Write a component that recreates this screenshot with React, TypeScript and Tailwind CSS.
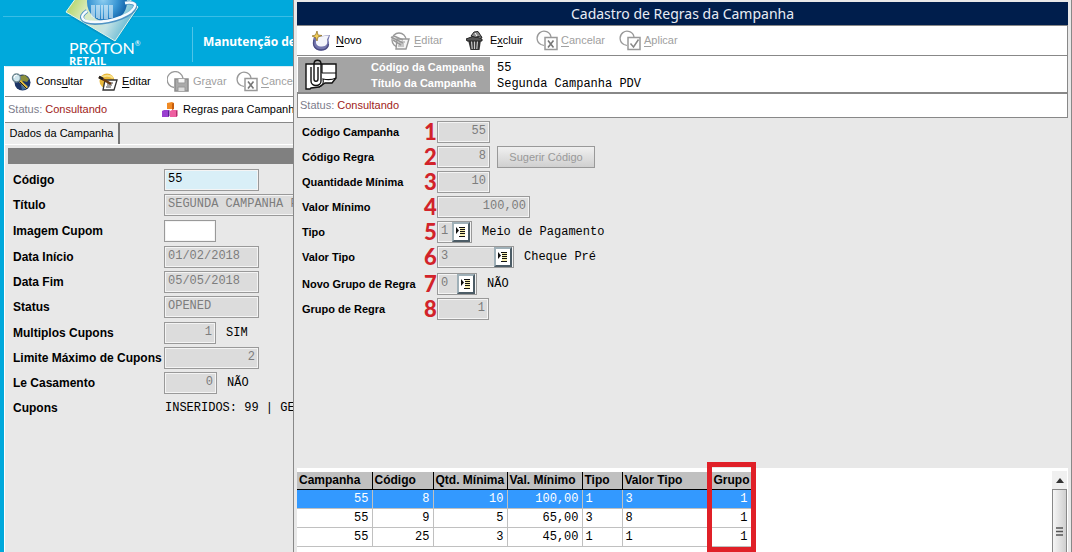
import type { ReactNode } from 'react';
import clsx from 'clsx';

type ToolButtonProps = {
  icon: ReactNode;
  before?: string;
  hotkey?: string;
  after?: string;
  disabled?: boolean;
  className?: string;
};

type FieldProps = {
  id: string;
  label: string;
  value: string;
  width: string;
  step?: string;
  hint?: string;
  align?: 'left' | 'right';
  tone?: 'disabled' | 'active' | 'empty';
  lookup?: boolean;
  labelClass: string;
  children?: ReactNode;
};

const GlobeSearchIcon = () => (
  <svg width="20" height="18" viewBox="0 0 20 18" aria-hidden="true">
    <circle cx="11.5" cy="9.5" r="8" fill="#1c3566" />
    <path d="M9 3l5-1 4 4-2 3-4-1-3 2-2-3z" fill="#8b8f3c" />
    <path d="M10 12l4-1 3 2-2 3-4 1z" fill="#3c6c9c" />
    <path d="M9 8l7 7" stroke="#e8c03c" strokeWidth="2.5" />
    <path d="M8 8l8 8" stroke="#222" strokeWidth="1" />
    <circle cx="5.5" cy="5" r="4" fill="#cfe6ee" stroke="#6d8790" strokeWidth="1.4" />
    <path d="M3 5a3 3 0 0 1 3-3" fill="none" stroke="#fff" />
  </svg>
);

const EditIcon = () => (
  <svg width="20" height="18" viewBox="0 0 20 18" aria-hidden="true">
    <circle cx="9" cy="8" r="7.5" fill="#e9b83a" />
    <path d="M2 6c3-4 10-4 13-1" fill="none" stroke="#f8e08a" strokeWidth="2" />
    <path d="M7 7h12l-3 10H5z" fill="#fff" stroke="#333" strokeWidth="1.3" />
    <path d="M9 10h6M9 12h5M8 14h5" stroke="#444" strokeWidth="1" />
    <path d="M1 4l12 7" stroke="#6b3b12" strokeWidth="2.6" />
    <path d="M1 4l4 2" stroke="#222" strokeWidth="2.6" />
  </svg>
);

const EditOffIcon = () => (
  <svg width="20" height="18" viewBox="0 0 20 18" fill="none" stroke="#999" aria-hidden="true">
    <circle cx="9" cy="8" r="7" strokeWidth="1.3" />
    <path d="M7 7h12l-3 10H6z" fill="#f4f4f4" strokeWidth="1.4" />
    <path d="M9 10h6M9 12h5M8 14h6" />
    <path d="M1 5l12 6M3 8l8 5M4 4l9 4" strokeWidth="1.5" />
  </svg>
);

const SaveOffIcon = () => (
  <svg width="22" height="21" viewBox="0 0 22 21" fill="none" stroke="#999" aria-hidden="true">
    <path d="M7 16.5A8 8 0 1 1 16 7" strokeWidth="1.3" />
    <rect x="8" y="8" width="13" height="12" fill="#aaa" stroke="#8c8c8c" strokeWidth="1.5" />
    <path d="M11 8v4h7V8" fill="#f5f5f5" />
    <path d="M11 20v-4h7v4" fill="#ddd" />
  </svg>
);

const MarkOffIcon = ({ mark }: { mark: 'cross' | 'check' }) => (
  <svg width="22" height="21" viewBox="0 0 22 21" fill="none" stroke="#999" aria-hidden="true">
    <path d="M8 15.5l-3-1A7 7 0 1 1 15 7" strokeWidth="1.3" />
    <rect x="9" y="7.5" width="12" height="12" fill="#fff" strokeWidth="1.5" />
    {mark === 'cross' ? (
      <path d="M12 10.5l5.5 7M17.5 10.5L12 17.5" stroke="#777" strokeWidth="1.6" />
    ) : (
      <path d="M11.5 13.5l3 3.5 5-7.5" stroke="#888" strokeWidth="1.5" />
    )}
  </svg>
);

const NewIcon = () => (
  <svg width="20" height="20" viewBox="0 0 20 20" aria-hidden="true">
    <path d="M3 6l16-2-1.500 5c2 6-1 10.500-7 10.500S2 16 2 11c0-2 0-3 1-5z" fill="#7577ae" />
    <path d="M5 6l13-1.500-2 4c1 4-.5 7-5 7s-6.500-2-6-5.500z" fill="#f4f5fb" />
    <path d="M3 9c-2 6 2 10 7 10 4 0 7-2 7.500-6" fill="none" stroke="#4d4e84" strokeWidth="1.3" />
    <path d="M6 0l1 4 4 .5-4 1.500-1 4-1.500-3.500L1 5l3.500-1z" fill="#f3cf57" stroke="#8a6a20" strokeWidth=".7" />
  </svg>
);

const TrashIcon = () => (
  <svg width="18" height="20" viewBox="0 0 18 20" aria-hidden="true">
    <path d="M2 9h13l-1.500 10h-9z" fill="#333" />
    <path d="M5.500 10l.7 8M8.500 10v8M11.500 10l-.7 8" stroke="#c8c8c8" strokeWidth="1.2" />
    <path d="M0 8l8-3 8 3v2H1z" fill="#555" stroke="#222" />
    <path d="M5 5l3-4 4-.5 4 6-4-1-2 1z" fill="#8a8a8a" stroke="#222" />
    <path d="M9 2l2 3" stroke="#fff" />
  </svg>
);

const BlocksIcon = () => (
  <svg width="16" height="16" viewBox="0 0 16 16" aria-hidden="true">
    <path d="M5 1l5-1 2 1v6H5z" fill="#f08a24" />
    <path d="M10 1.500l2-.5v6l-2 1z" fill="#c65c0c" />
    <path d="M0 9l2-1h5v6l-1 1H0z" fill="#9a3fd0" />
    <path d="M6 9l1.500-1v6L6 15z" fill="#5c1c94" />
    <path d="M8 9l2-1h5v6l-1 1H8z" fill="#ee5fa0" />
    <path d="M14 9l1.500-1v6L14 15z" fill="#b42c6c" />
  </svg>
);

const ClipIcon = () => (
  <svg width="32" height="32" viewBox="0 0 32 32" aria-hidden="true">
    <path d="M1 5h30v14l-4 5h-7l-6 4-8 1-1 1H1z" fill="#fff" stroke="#111" strokeWidth="1.4" />
    <path d="M17 5v9M17 14h14M14 28c3-1 5-4 4-8 5 1 9 1 13-1" fill="none" stroke="#111" strokeWidth="1.2" />
    <path
      d="M6 8v14c0 6 10 6 10 0V5c0-5-7-5-7 0v15c0 3 4 3 4 0V8"
      fill="none"
      stroke="#111"
      strokeWidth="1.4"
    />
  </svg>
);

const LookupIcon = () => (
  <svg width="14" height="16" viewBox="0 0 14 16" aria-hidden="true">
    <path d="M2 3v7l3-3.500z" fill="#111" />
    <rect x="6" y="3" width="5" height="9" fill="#f7eeb0" />
    <path d="M5 3.500h6M6 5.500h5M6 7.500h5M6 9.500h5M5 12.500h6" stroke="#111" />
  </svg>
);

const ProtonLogo = () => (
  <svg width="78" height="43" viewBox="64 0 78 43" aria-hidden="true">
    <defs>
      <linearGradient id="sheet" x1="0" y1="0" x2="1" y2="0.3">
        <stop offset="0" stopColor="#a9cf54" />
        <stop offset="0.35" stopColor="#dcecc0" />
        <stop offset="0.7" stopColor="#c4e2e4" />
        <stop offset="1" stopColor="#5eb6d2" />
      </linearGradient>
      <radialGradient id="globe" cx="0.4" cy="0.45" r="0.6">
        <stop offset="0" stopColor="#8ccdf0" />
        <stop offset="0.6" stopColor="#3a96d4" />
        <stop offset="1" stopColor="#1566ac" />
      </radialGradient>
    </defs>
    <path d="M67 15l47 28 26-36z" fill="#0786b4" opacity=".5" />
    <path d="M66 12L76-2h52l10 9-23 34z" fill="url(#sheet)" stroke="#e8f5ea" />
    <circle cx="107" cy="2" r="20" fill="url(#globe)" />
    <path
      d="M92 5v12M94 5v13M97 5v13M99 5v14M102 5v14M105 5v14M107 5v14M110 5v13M112 5v13"
      stroke="#e4f3fb"
      strokeWidth="1.2"
    />
    <path
      d="M87 11c-9 6-5 12 8 12 18 0 38-8 40-16 1-4-4-5-10-4"
      fill="none"
      stroke="#4f93c4"
      strokeWidth="4"
    />
    <path
      d="M87 11c-9 6-5 11 8 11 18 0 38-8 40-16 1-3-4-4-10-3"
      fill="none"
      stroke="#f6fbff"
      strokeWidth="2.5"
    />
  </svg>
);

const ToolButton = ({ icon, before, hotkey, after, disabled, className }: ToolButtonProps) => (
  <button
    type="button"
    disabled={disabled}
    className={clsx(
      'flex shrink-0 items-center whitespace-nowrap text-[11px]',
      disabled ? 'text-[#a0a0a0]' : 'text-black',
      className
    )}>
    {icon}
    <span>
      {before}
      {hotkey && <span className="underline underline-offset-2">{hotkey}</span>}
      {after}
    </span>
  </button>
);

const StatusText = () => (
  <p className="text-[11px] whitespace-nowrap text-[#7c7c8c]">
    Status: <span className="text-[#a01c20]">Consultando</span>
  </p>
);

const Field = ({
  id,
  label,
  value,
  width,
  step,
  hint,
  align = 'left',
  tone = 'disabled',
  lookup,
  labelClass,
  children,
}: FieldProps) => (
  <div className="flex h-[22px] items-center whitespace-nowrap">
    <label htmlFor={id} className={clsx('shrink-0 font-bold', labelClass)}>
      {label}
    </label>
    {step && (
      <span className="w-[13px] shrink-0 font-[Lato] text-[22px] leading-[22px] font-black text-[#d2232a]">
        {step}
      </span>
    )}
    <span
      className={clsx(
        'flex h-[22px] shrink-0 items-center border border-[#999] ring-1 ring-[#f4f4f4] ring-inset',
        width,
        tone === 'disabled' && 'bg-[#dcdcdc]',
        tone === 'active' && 'bg-[#d9eff7]',
        tone === 'empty' && 'bg-white'
      )}>
      <input
        id={id}
        defaultValue={value}
        disabled={tone === 'disabled'}
        className={clsx(
          "mt-px h-4 w-full min-w-0 self-start bg-transparent px-[3px] font-['Liberation_Mono',monospace] text-[12px] leading-4 outline-none",
          tone === 'disabled' ? 'text-[#7d7d7d]' : 'text-black',
          align === 'right' && 'text-right'
        )}
      />
      {lookup && (
        <button
          type="button"
          aria-label={`Pesquisar ${label}`}
          className="mr-px shrink-0 border-2 border-t-[#9fb0b8] border-r-[#4c5c66] border-b-[#4c5c66] border-l-[#9fb0b8] bg-white">
          <LookupIcon />
        </button>
      )}
    </span>
    {hint && (
      <span className="ml-[10px] font-['Liberation_Mono',monospace] text-[12px]">{hint}</span>
    )}
    {children}
  </div>
);

const columns = [
  { title: 'Campanha', width: 'w-[75px]', right: true },
  { title: 'Código', width: 'w-[61px]', right: true },
  { title: 'Qtd. Mínima', width: 'w-[74px]', right: true },
  { title: 'Val. Mínimo', width: 'w-[75px]', right: true },
  { title: 'Tipo', width: 'w-[40px]', right: false },
  { title: 'Valor Tipo', width: 'w-[89px]', right: false },
  { title: 'Grupo', width: 'w-[40px]', right: true },
];

const rules = [
  ['55', '8', '10', '100,00', '1', '3', '1'],
  ['55', '9', '5', '65,00', '3', '8', '1'],
  ['55', '25', '3', '45,00', '1', '1', '1'],
];

const RulesTable = () => (
  <div className="relative mt-1 w-[454px] shrink-0 self-start">
    <table className="w-full table-fixed border-collapse">
      <thead>
        <tr className="h-[17px] bg-[#c0c0c0]">
          {columns.map((column) => (
            <th
              key={column.title}
              className={clsx(
                'border-r border-b border-black p-0 pl-[2px] text-left text-[12px] leading-4 font-bold whitespace-nowrap',
                column.width
              )}>
              {column.title}
            </th>
          ))}
        </tr>
      </thead>
      <tbody>
        {rules.map((rule, index) => (
          <tr key={rule[1]} className={clsx('h-[19px]', index === 0 && 'bg-[#3399ff] text-white')}>
            {rule.map((cell, i) => (
              <td
                key={columns[i].title}
                className={clsx(
                  "border-r border-b border-[#c0c0c0] px-[3px] py-0 font-['Liberation_Mono',monospace] text-[12px] leading-[18px]",
                  columns[i].right && 'text-right'
                )}>
                {cell}
              </td>
            ))}
          </tr>
        ))}
      </tbody>
    </table>
    <div className="pointer-events-none absolute -top-[10px] -right-[5px] -bottom-[5px] w-[49px] border-[5px] border-[#e02028]" />
  </div>
);

const ScrollBar = () => (
  <div className="mt-[3px] mr-px flex w-[15px] shrink-0 flex-col bg-[#f0f0f0]">
    <button type="button" aria-label="Rolar para cima" className="flex h-[18px] items-center justify-center">
      <svg width="8" height="5" viewBox="0 0 8 5" aria-hidden="true">
        <path d="M4 0l4 5H0z" fill="#333" />
      </svg>
    </button>
    <div className="flex flex-1 justify-center border border-b-0 border-[#888] bg-linear-to-r from-[#f6f6f6] to-[#cfcfcf] pt-[37px]">
      <svg width="7" height="9" viewBox="0 0 7 9" aria-hidden="true">
        <path d="M0 1h7M0 4.500h7M0 8h7" stroke="#555" strokeWidth="1.3" />
      </svg>
    </div>
  </div>
);

const CampaignWindow = () => {
  const labelClass = 'w-[151px] text-[12px]';

  return (
    <section className="flex w-[293px] shrink-0 flex-col overflow-hidden bg-[#00a9dc]">
      <header className="relative flex h-[66px] shrink-0">
        <div className="absolute top-4 right-0 left-[3px] h-px bg-[#39bde6]" />
        <div className="relative ml-16 w-32 shrink-0 text-white">
          <ProtonLogo />
          <p className="absolute top-[40px] left-[5px] flex items-start font-[Lato] text-[16px] leading-[15px]">
            PRÓTON<span className="text-[7px] leading-[7px]">®</span>
          </p>
          <p className="absolute top-[55px] left-[5px] font-['Open_Sans'] text-[11px] leading-[11px] font-bold">
            RETAIL
          </p>
        </div>
        <h1 className="mt-[27px] h-[35px] border-l border-[#4fc4e8] pl-[10px] font-['Noto_Sans'] text-[12px] leading-[29px] font-bold whitespace-nowrap text-white">
          Manutenção de
        </h1>
      </header>

      <div className="ml-1 flex flex-1 flex-col border-l border-white bg-[#e8e8e8]">
        <div className="flex h-[31px] shrink-0 items-center border-t border-b border-t-[#d8eef5] border-b-[#888] bg-white pl-[6px]">
          <ToolButton icon={<GlobeSearchIcon />} before="Cons" hotkey="u" after="ltar" className="w-[87px] gap-[5px]" />
          <ToolButton icon={<EditIcon />} hotkey="E" after="ditar" className="w-[69px] gap-1" />
          <ToolButton icon={<SaveOffIcon />} before="Gr" hotkey="a" after="var" disabled className="w-[69px] gap-1" />
          <ToolButton icon={<MarkOffIcon mark="cross" />} hotkey="C" after="ancelar" disabled className="gap-[3px]" />
        </div>
        <div className="flex h-[26px] shrink-0 items-center border-b border-[#888] bg-white pl-[3px]">
          <div className="w-[154px] shrink-0">
            <StatusText />
          </div>
          <ToolButton icon={<BlocksIcon />} before="Regras para Campanha" className="gap-[5px]" />
        </div>
        <div role="tablist" className="flex h-[22px] shrink-0 border-b border-white">
          <button
            type="button"
            role="tab"
            aria-selected="true"
            className="w-[115px] border-r-2 border-[#777] bg-[#eee] text-[11px] whitespace-nowrap text-black">
            Dados da Campanha
          </button>
        </div>
        <div className="mt-[3px] ml-[3px] h-4 shrink-0 bg-[#808080]" />
        <form className="mt-[5px] ml-2 flex flex-col gap-1">
          <div className="flex flex-col gap-[3px]">
            <Field id="codigo" label="Código" value="55" width="w-[95px]" tone="active" labelClass={labelClass} />
            <Field id="titulo" label="Título" value="SEGUNDA CAMPANHA PDV" width="w-[240px]" labelClass={labelClass} />
          </div>
          <Field id="imagem" label="Imagem Cupom" value="" width="w-[52px]" tone="empty" labelClass={labelClass} />
          <div className="flex flex-col gap-[3px]">
            <Field id="inicio" label="Data Início" value="01/02/2018" width="w-[95px]" labelClass={labelClass} />
            <Field id="fim" label="Data Fim" value="05/05/2018" width="w-[95px]" labelClass={labelClass} />
            <Field id="status" label="Status" value="OPENED" width="w-[95px]" labelClass={labelClass} />
          </div>
          <div className="flex flex-col gap-[3px]">
            <Field id="multiplos" label="Multiplos Cupons" value="1" width="w-[52px]" align="right" hint="SIM" labelClass={labelClass} />
            <Field id="limite" label="Limite Máximo de Cupons" value="2" width="w-[95px]" align="right" labelClass={labelClass} />
            <Field id="casamento" label="Le Casamento" value="0" width="w-[53px]" align="right" hint="NÃO" labelClass={labelClass} />
            <p className="flex h-[22px] items-center whitespace-nowrap">
              <span className="w-[152px] shrink-0 text-[12px] font-bold">Cupons</span>
              <span className="font-['Liberation_Mono',monospace] text-[12px]">INSERIDOS: 99 | GER</span>
            </p>
          </div>
        </form>
      </div>
    </section>
  );
};

const RulesWindow = () => {
  const labelClass = 'w-[122px] text-[11px]';

  return (
    <section className="flex min-w-0 flex-1 flex-col border-r border-l border-[#888] bg-[#e8e8e8] pt-[2px] pr-[3px] pl-[3px]">
      <h2 className="flex h-[23px] shrink-0 items-center justify-center bg-[#001e4c] font-['Noto_Sans'] text-[14px] text-[#e8ecf4]">
        Cadastro de Regras da Campanha
      </h2>
      <div className="flex h-[31px] shrink-0 items-center border border-l-0 border-[#888] bg-white pl-[14px]">
        <ToolButton icon={<NewIcon />} hotkey="N" after="ovo" className="w-[79px] gap-[5px]" />
        <ToolButton icon={<EditOffIcon />} hotkey="E" after="ditar" disabled className="w-[76px] gap-1" />
        <ToolButton icon={<TrashIcon />} before="E" hotkey="x" after="cluir" className="w-[70px] gap-[6px]" />
        <ToolButton icon={<MarkOffIcon mark="cross" />} hotkey="C" after="ancelar" disabled className="w-[83px] gap-[3px]" />
        <ToolButton icon={<MarkOffIcon mark="check" />} hotkey="A" after="plicar" disabled className="gap-[3px]" />
      </div>
      <div className="flex h-[37px] shrink-0 border-r border-b border-[#888] bg-white pt-px pl-px">
        <div className="flex w-[192px] shrink-0 items-center bg-[#a4a4a4] pl-[7px] text-white">
          <ClipIcon />
          <div className="ml-[34px] text-[11px] leading-4 font-bold whitespace-nowrap">
            <p>Código da Campanha</p>
            <p>Título da Campanha</p>
          </div>
        </div>
        <div className="flex flex-col justify-end pl-[7px] font-['Liberation_Mono',monospace] text-[12px] leading-4">
          <p>55</p>
          <p>Segunda Campanha PDV</p>
        </div>
      </div>
      <div className="flex h-[25px] shrink-0 items-center border border-[#888] bg-white pl-[2px]">
        <StatusText />
      </div>

      <form className="mt-[3px] ml-[5px] flex flex-1 flex-col gap-[5px] pb-4">
        <div className="flex flex-col gap-[3px]">
          <Field id="r-campanha" step="1" label="Código Campanha" value="55" width="w-[53px]" align="right" labelClass={labelClass} />
          <Field id="r-regra" step="2" label="Código Regra" value="8" width="w-[53px]" align="right" labelClass={labelClass}>
            <button
              type="button"
              disabled
              className="ml-[7px] h-[22px] w-[98px] border border-[#999] bg-linear-to-b from-[#f0f0f0] to-[#d0d0d0] text-[11px] text-[#999]">
              Sugerir Código
            </button>
          </Field>
          <Field id="r-qtd" step="3" label="Quantidade Mínima" value="10" width="w-[53px]" align="right" labelClass={labelClass} />
          <Field id="r-valor" step="4" label="Valor Mínimo" value="100,00" width="w-[93px]" align="right" labelClass={labelClass} />
          <Field id="r-tipo" step="5" label="Tipo" value="1" width="w-[35px]" lookup hint="Meio de Pagamento" labelClass={labelClass} />
          <Field id="r-valor-tipo" step="6" label="Valor Tipo" value="3" width="w-[77px]" lookup hint="Cheque Pré" labelClass={labelClass} />
        </div>
        <div className="flex flex-col gap-[3px]">
          <Field id="r-novo" step="7" label="Novo Grupo de Regra" value="0" width="w-[40px]" lookup hint="NÃO" labelClass={labelClass} />
          <Field id="r-grupo" step="8" label="Grupo de Regra" value="1" width="w-[52px]" align="right" labelClass={labelClass} />
        </div>
      </form>

      <div className="flex min-h-[84px] shrink-0 justify-between bg-white">
        <RulesTable />
        <ScrollBar />
      </div>
    </section>
  );
};

export default function App() {
  return (
    <main className="flex min-h-screen overflow-hidden font-['Liberation_Sans',sans-serif] text-black">
      <CampaignWindow />
      <RulesWindow />
    </main>
  );
}
